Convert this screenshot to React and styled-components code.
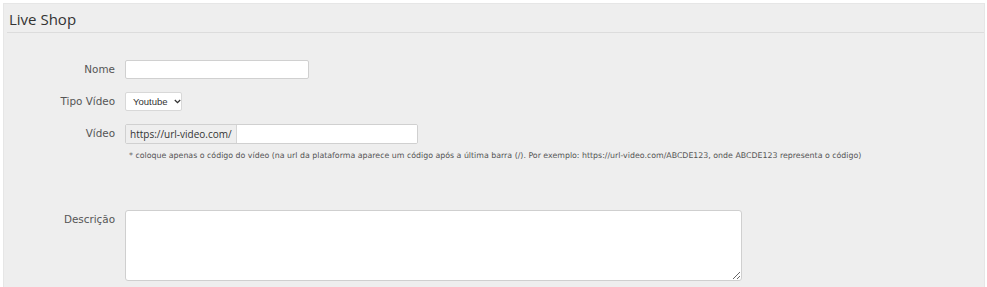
import React from "react";
import styled, { createGlobalStyle } from "styled-components";

const Global = createGlobalStyle`
  html, body { margin: 0; padding: 0; background: #fff; }
  body { font-family: "DejaVu Sans", Verdana, sans-serif; color: #333; }
  #root { padding: 3px 2px 0 3px; }
`;

const Panel = styled.section`
  background: #eeeeee;
  border: 1px solid #e6e6e6;
  border-bottom: none;
  height: 284px;
  box-sizing: border-box;
  overflow: hidden;
`;

const Header = styled.header`
  margin: 0 0 0 3px;
  height: 28px;
  border-bottom: 1px solid #dcdcdc;
  display: flex;
  align-items: center;
  padding-left: 2px;
`;

const Title = styled.h2`
  margin: 0;
  font-family: "Open Sans", sans-serif;
  font-weight: 400;
  font-size: 15px;
  color: #333;
  padding-top: 2px;
`;

const Form = styled.form`
  padding-top: 27px;
  display: flex;
  flex-direction: column;
`;

const Row = styled.div`
  display: grid;
  grid-template-columns: 111px 1fr;
  column-gap: 10px;
  align-items: start;
  margin-bottom: ${(p) => p.$mb || 13}px;
`;

const Label = styled.label`
  text-align: right;
  font-family: "DejaVu Sans", Verdana, sans-serif;
  font-weight: 400;
  font-size: 10.4px;
  color: #555;
  line-height: 19px;
`;

const Field = styled.div`
  display: flex;
  flex-direction: column;
  align-items: flex-start;
`;

const TextInput = styled.input`
  box-sizing: border-box;
  width: ${(p) => p.$w}px;
  height: 19px;
  border: 1px solid #d0d0d0;
  border-radius: 2px;
  background: #fff;
  padding: 0 4px;
  outline: none;
  font: inherit;
  font-size: 10px;
`;

const Select = styled.div`
  box-sizing: border-box;
  width: 57px;
  height: 19px;
  border: 1px solid #d8d8d8;
  border-radius: 2px;
  background: #fff;
  display: flex;
  align-items: center;
  padding-left: 7px;
  gap: 6px;
  font-family: "Liberation Sans", Arial, sans-serif;
  font-size: 9.5px;
  color: #333;
  white-space: nowrap;
  svg { flex-shrink: 0; }
`;

const Group = styled.div`
  display: flex;
  width: 293px;
  height: 20px;
  box-sizing: border-box;
  border: 1px solid #d0d0d0;
  border-radius: 2px;
  background: #fff;
  overflow: hidden;
`;

const Addon = styled.span`
  background: #eeeeee;
  border-right: 1px solid #d6d6d6;
  padding: 0 4px 0 4px;
  display: flex;
  align-items: center;
  font-family: "Open Sans", sans-serif;
  font-size: 10px;
  color: #333;
  white-space: nowrap;
`;

const GroupInput = styled.input`
  flex: 1;
  border: none;
  outline: none;
  min-width: 0;
`;

const Help = styled.p`
  margin: 7px 0 0 4px;
  font-size: 7.85px;
  color: #555;
  white-space: nowrap;
`;

const TextArea = styled.textarea`
  box-sizing: border-box;
  width: 617px;
  height: 71px;
  border: 1px solid #cfcfcf;
  border-radius: 3px;
  background: #fff;
  outline: none;
  display: block;
`;

export default function App() {
  return (
    <>
      <Global />
      <Panel>
        <Header>
          <Title>Live Shop</Title>
        </Header>
        <Form>
          <Row>
            <Label>Nome</Label>
            <Field>
              <TextInput $w={184} />
            </Field>
          </Row>
          <Row>
            <Label>Tipo Vídeo</Label>
            <Field>
              <Select>
                Youtube
                <svg width="7" height="5" viewBox="0 0 7 5">
                  <path d="M0.8 1 L3.5 3.7 L6.2 1" fill="none" stroke="#333" strokeWidth="1.3" />
                </svg>
              </Select>
            </Field>
          </Row>
          <Row $mb={50}>
            <Label>Vídeo</Label>
            <Field>
              <Group>
                <Addon>https://url-video.com/</Addon>
                <GroupInput />
              </Group>
              <Help>
                * coloque apenas o código do vídeo (na url da plataforma aparece um código após a última barra (/). Por exemplo: https://url-video.com/ABCDE123, onde ABCDE123 representa o código)
              </Help>
            </Field>
          </Row>
          <Row>
            <Label>Descrição</Label>
            <Field>
              <TextArea />
            </Field>
          </Row>
        </Form>
      </Panel>
    </>
  );
}
